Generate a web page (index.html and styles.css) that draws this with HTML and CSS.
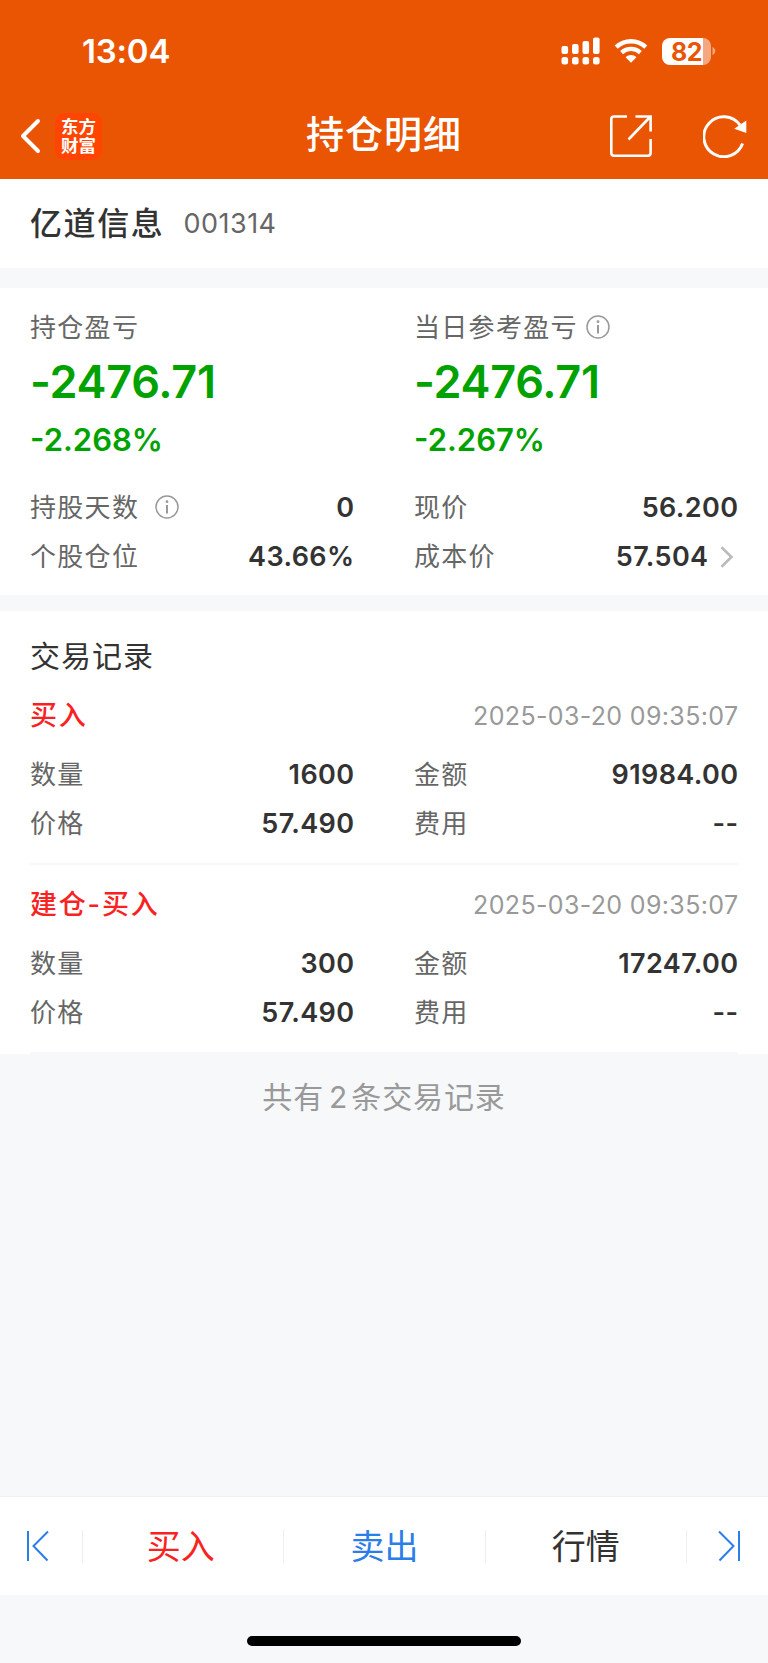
FILE: index.html
```html
<!DOCTYPE html>
<html lang="zh-CN">
<head>
    <meta charset="UTF-8">
    <title>持仓明细</title>
    <link rel="stylesheet" href="styles.css">
</head>
<body>
    <div class="page">
        <header class="header">
            <div class="status-bar">
                <span class="time">13:04</span>
                <div class="status-icons">
                    <svg class="signal" width="40" height="28" viewBox="0 0 40 28" fill="#fff">
                        <rect x="0.5" y="9" width="6.6" height="8" rx="2"/>
                        <rect x="11" y="7" width="6.6" height="10" rx="2"/>
                        <rect x="21.5" y="4" width="6.6" height="13" rx="2"/>
                        <rect x="32" y="0.5" width="6.6" height="16.5" rx="2"/>
                        <rect x="0.5" y="20" width="6.6" height="7.5" rx="2.5"/>
                        <rect x="11" y="20" width="6.6" height="7.5" rx="2.5"/>
                        <rect x="21.5" y="20" width="6.6" height="7.5" rx="2.5"/>
                        <rect x="32" y="20" width="6.6" height="7.5" rx="2.5"/>
                    </svg>
                    <svg class="wifi" width="34" height="26" viewBox="0 0 34 26">
                        <path d="M2.2 9.2C10.5 1.2 23.5 1.2 31.8 9.2" fill="none" stroke="#fff" stroke-width="4.4"/>
                        <path d="M7.6 14.6C13 9.7 21 9.7 26.4 14.6" fill="none" stroke="#fff" stroke-width="4.2"/>
                        <path d="M11.6 19.2C14.6 16.4 19.4 16.4 22.4 19.2L17 24.7Z" fill="#fff"/>
                    </svg>
                    <div class="battery"><span class="battery-text">82</span></div>
                    <svg class="battery-tip" width="4" height="10" viewBox="0 0 4 10"><path d="M0.5 1C4.2 2.6 4.2 7.4 0.5 9Z" fill="#f5a880"/></svg>
                </div>
            </div>
            <div class="nav-bar">
                <div class="nav-left">
                    <svg width="22" height="36" viewBox="0 0 22 36" fill="none" stroke="#fff" stroke-width="4" stroke-linecap="round" stroke-linejoin="round"><path d="M18 3L3 18L18 33"/></svg>
                    <div class="logo"><span>东方</span><span>财富</span></div>
                </div>
                <h1 class="title">持仓明细</h1>
                <div class="nav-right">
                    <svg width="42" height="42" viewBox="0 0 42 42" fill="none" stroke="#fff" stroke-width="2.6">
                        <path d="M17 1.5H4Q1.3 1.5 1.3 4V38Q1.3 40.7 4 40.7H38Q40.6 40.7 40.6 38V24"/>
                        <path d="M25.5 1.5H40.6V16.5M40 2L18.5 24.5"/>
                    </svg>
                    <svg class="refresh" width="44" height="43" viewBox="0 0 44 43">
                        <path d="M39.6 28.5A20 20 0 1 1 37 10" fill="none" stroke="#fff" stroke-width="3"/>
                        <path d="M43.3 5.5V18L31.2 13.8Z" fill="#fff"/>
                    </svg>
                </div>
            </div>
        </header>

        <section class="stock">
            <span class="stock-name">亿道信息</span>
            <span class="stock-code">001314</span>
        </section>

        <section class="summary">
            <div class="columns">
                <div class="profit">
                    <div class="label">持仓盈亏</div>
                    <div class="amount">-2476.71</div>
                    <div class="percent">-2.268%</div>
                </div>
                <div class="profit">
                    <div class="label">当日参考盈亏<svg class="info" width="24" height="24" viewBox="0 0 24 24"><circle cx="12" cy="12" r="11" fill="none" stroke="#999" stroke-width="1.5"/><path d="M12 10V18.5" stroke="#999" stroke-width="2"/><circle cx="12" cy="6.7" r="1.4" fill="#999"/></svg></div>
                    <div class="amount">-2476.71</div>
                    <div class="percent">-2.267%</div>
                </div>
            </div>
            <div class="columns details">
                <div class="row">
                    <span class="label">持股天数<svg class="info info-wide" width="24" height="24" viewBox="0 0 24 24"><circle cx="12" cy="12" r="11" fill="none" stroke="#999" stroke-width="1.5"/><path d="M12 10V18.5" stroke="#999" stroke-width="2"/><circle cx="12" cy="6.7" r="1.4" fill="#999"/></svg></span>
                    <span class="value">0</span>
                </div>
                <div class="row"><span class="label">现价</span><span class="value">56.200</span></div>
                <div class="row"><span class="label">个股仓位</span><span class="value">43.66%</span></div>
                <div class="row">
                    <span class="label">成本价</span>
                    <span class="value">57.504<svg class="more" width="14" height="22" viewBox="0 0 14 22" fill="none" stroke="#bbb" stroke-width="2.6"><path d="M1.5 1.2L11.5 11L1.5 20.8"/></svg></span>
                </div>
            </div>
        </section>

        <section class="records">
            <h2 class="records-title">交易记录</h2>
            <div class="record">
                <div class="record-head">
                    <span class="record-type">买入</span>
                    <span class="record-time">2025-03-20 09:35:07</span>
                </div>
                <div class="columns">
                    <div class="row"><span class="label">数量</span><span class="value">1600</span></div>
                    <div class="row"><span class="label">金额</span><span class="value">91984.00</span></div>
                    <div class="row"><span class="label">价格</span><span class="value">57.490</span></div>
                    <div class="row"><span class="label">费用</span><span class="value">--</span></div>
                </div>
            </div>
            <div class="record">
                <div class="record-head">
                    <span class="record-type">建仓-买入</span>
                    <span class="record-time">2025-03-20 09:35:07</span>
                </div>
                <div class="columns">
                    <div class="row"><span class="label">数量</span><span class="value">300</span></div>
                    <div class="row"><span class="label">金额</span><span class="value">17247.00</span></div>
                    <div class="row"><span class="label">价格</span><span class="value">57.490</span></div>
                    <div class="row"><span class="label">费用</span><span class="value">--</span></div>
                </div>
            </div>
        </section>

        <p class="total">共有<span class="total-count">2</span>条交易记录</p>

        <footer class="bottom">
            <nav class="toolbar">
                <a class="step"><svg width="24" height="32" viewBox="0 0 24 32" fill="none" stroke="#2b7de9" stroke-width="2"><path d="M2 1V31M22 1.5L7.5 16L21.5 30.5"/></svg></a>
                <a class="tab buy">买入</a>
                <a class="tab sell">卖出</a>
                <a class="tab quote">行情</a>
                <a class="step step-next"><svg width="24" height="32" viewBox="0 0 24 32" fill="none" stroke="#2b7de9" stroke-width="2"><path d="M22 1V31M2 1.5L16.5 16L2.5 30.5"/></svg></a>
            </nav>
            <div class="home-bar"></div>
        </footer>
    </div>
</body>
</html>
```
FILE: styles.css
```css
* {
    box-sizing: border-box;
}

body {
    margin: 0;
    font-family: Inter, "Noto Sans CJK SC", sans-serif;
    color: #333;
    background-color: #f6f8fa;
}

.page {
    display: flex;
    flex-direction: column;
    width: 768px;
    height: 1663px;
}

svg {
    display: block;
    flex-shrink: 0;
}

/* header */
.header {
    height: 179px;
    background-color: #ea5504;
    color: #fff;
}

.status-bar {
    display: flex;
    justify-content: space-between;
    align-items: center;
    height: 102px;
    padding: 0 52px 0 82px;
}

.time {
    font-size: 33px;
    font-weight: 600;
    line-height: 42px;
    letter-spacing: -0.2px;
}

.status-icons {
    display: flex;
    align-items: center;
}

.wifi {
    margin: 0 14px 0 13px;
}

.battery {
    width: 49px;
    height: 27px;
    border-radius: 8px;
    background: linear-gradient(to right, #fff 41px, #f5a880 41px);
}

.battery-text {
    display: block;
    padding-left: 9px;
    font-size: 25px;
    font-weight: 700;
    line-height: 28px;
    letter-spacing: -0.4px;
    color: #ea5504;
}

.battery-tip {
    margin-left: 1px;
}

.nav-bar {
    display: grid;
    grid-template-columns: 1fr auto 1fr;
    align-items: center;
    height: 68px;
    padding: 0 21px 0 20px;
}

.nav-left {
    display: flex;
    align-items: center;
}

.logo {
    display: flex;
    flex-direction: column;
    align-items: center;
    justify-content: center;
    width: 47px;
    height: 47px;
    margin-left: 13px;
    border-radius: 9px;
    background-color: #ff4500;
    font-size: 17.5px;
    font-weight: 700;
    line-height: 19.5px;
}

.title {
    margin: 0 0 4px 1px;
    font-size: 38px;
    font-weight: 500;
    line-height: 44px;
    letter-spacing: 1px;
}

.nav-right {
    display: flex;
    justify-content: flex-end;
    padding-top: 1px;
}

.refresh {
    margin-left: 51px;
}

/* stock name */
.stock {
    display: flex;
    align-items: center;
    height: 89px;
    padding: 0 30px;
    background-color: #fff;
    line-height: 46px;
}

.stock-name {
    font-size: 32px;
    font-weight: 500;
    letter-spacing: 1.6px;
}

.stock-code {
    margin-left: 19px;
    font-size: 27px;
    letter-spacing: 0.5px;
    color: #666;
}

/* holding summary */
.summary {
    height: 307px;
    margin-top: 20px;
    padding: 21px 30px 0;
    background-color: #fff;
}

.columns {
    display: grid;
    grid-template-columns: 1fr 1fr;
    column-gap: 60px;
}

.label {
    display: flex;
    align-items: center;
    font-size: 26px;
    line-height: 38px;
    letter-spacing: 1.3px;
    color: #666;
}

.info {
    margin: -2px 0 0 8px;
}

.info-wide {
    margin-left: 16px;
}

.amount {
    height: 72px;
    font-size: 45px;
    font-weight: 600;
    line-height: 70px;
    letter-spacing: -0.3px;
    color: #00a200;
}

.percent {
    font-size: 31px;
    font-weight: 600;
    line-height: 42px;
    color: #00a200;
}

.details {
    margin-top: 22px;
}

.row {
    display: flex;
    justify-content: space-between;
    align-items: center;
    height: 49px;
}

.value {
    display: flex;
    align-items: center;
    margin-right: -0.5px;
    font-size: 27px;
    font-weight: 600;
    line-height: 38px;
    letter-spacing: 0.4px;
}

.more {
    margin: 0 5px 0 11px;
}

/* trade records */
.records {
    margin-top: 16px;
    padding: 20px 30px 0;
    background-color: #fff;
}

.records-title {
    margin: 0;
    font-size: 30px;
    font-weight: 400;
    line-height: 50px;
    letter-spacing: 1px;
}

.record {
    height: 189px;
    padding-top: 15px;
    border-bottom: 2px solid #f7f8fa;
}

.record-head {
    display: flex;
    justify-content: space-between;
    height: 59px;
    line-height: 50px;
}

.records-title + .record {
    height: 184px;
    padding-top: 10px;
}

.record-type {
    font-size: 27px;
    font-weight: 500;
    letter-spacing: 1.8px;
    color: #f92222;
}

.record-time {
    margin-right: -0.4px;
    font-size: 25px;
    letter-spacing: 0.35px;
    color: #999;
}

.total {
    margin: 23px 0 0;
    font-size: 30px;
    line-height: 40px;
    letter-spacing: 0.9px;
    text-align: center;
    color: #999;
}

.total-count {
    margin: 0 3px 0 5px;
}

/* bottom toolbar */
.bottom {
    margin-top: auto;
    height: 167px;
}

.toolbar {
    display: flex;
    align-items: center;
    height: 99px;
    border-top: 1px solid #f0f0f0;
    background-color: #fff;
}

.step {
    width: 83px;
    height: 33px;
    padding-left: 26px;
    border-right: 1px solid #eee;
}

.step-next {
    width: 81px;
    padding-left: 30px;
    border-right: none;
}

.tab {
    flex: 1;
    height: 33px;
    border-right: 1px solid #eee;
    font-size: 34px;
    line-height: 33px;
    text-align: center;
}

.buy {
    text-indent: -5px;
    color: #f92222;
}

.sell {
    color: #2b7de9;
}

.home-bar {
    width: 274px;
    height: 10px;
    margin: 41px auto 0;
    border-radius: 5px;
    background-color: #000;
}
```
